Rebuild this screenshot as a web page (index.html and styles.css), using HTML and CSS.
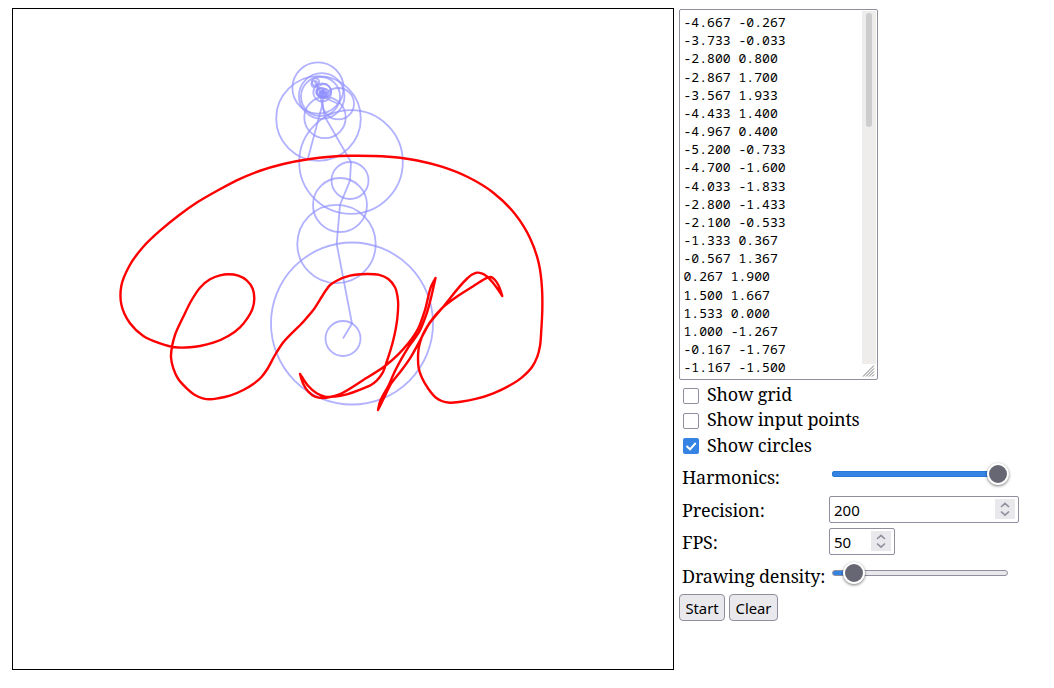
FILE: index.html
```
<!DOCTYPE html>
<html lang="en">
<head>
<meta charset="utf-8">
<title>Fourier drawing</title>
<link rel="stylesheet" href="styles.css">
</head>
<body>
<main class="app">
<svg class="canvas" viewBox="13 9 660 660">
<g class="circles">
<circle cx="343" cy="338.5" r="17.5"/><circle cx="352" cy="323.5" r="81"/><circle cx="336.5" cy="244" r="39.2"/><circle cx="340" cy="205" r="27"/><circle cx="350" cy="180.5" r="18.5"/><circle cx="351" cy="162" r="51.8"/><circle cx="318.5" cy="118.5" r="42.3"/><circle cx="325" cy="117.5" r="20.7"/><circle cx="318" cy="88" r="25.6"/><circle cx="321.7" cy="96" r="22.8"/><circle cx="338.3" cy="103.7" r="15.7"/><circle cx="320.5" cy="96.5" r="19.5"/>
<circle cx="322.3" cy="92.5" r="9"/><circle cx="315.5" cy="82" r="3.7"/><circle cx="314.5" cy="84" r="3"/><circle cx="324" cy="91" r="7"/><circle cx="322" cy="93" r="5"/><circle cx="320" cy="92" r="4"/><circle cx="323" cy="94" r="3"/><circle cx="325" cy="93" r="4"/><circle cx="323" cy="92" r="1.5"/><circle cx="321" cy="94" r="2"/><circle cx="325" cy="95" r="2"/>
<path d="M343 338.5L352 323.5L336.7 244L340 205L350 180.5L351 162L325 117L321 98L322 106L308 158.3M322 106L321 94L315 82L318 88L325 95M323 97L338 103.7"/>
</g>
<path class="trace" id="trace" d="M121.3 286L129.3 266L143.3 246.7L160 230.7L178.3 215.7L197.3 202.3L216.7 191L236.7 180.3L259.3 171L283.3 164L308.3 159.3L330 156.8L350 155.8L373.3 156L400 157.7L417.3 160.5L441.7 166.7L468.3 177.3L493.3 192.7L515 214L530.3 238.7L539 264.3L542 288.3L542.3 310L541.3 330L540 346L537.3 356.7L532 367L522 377.3L510 385.3L493.3 393.3L476.7 398.7L460.7 401.7L450 402.7L441.7 401L436 397.7L428.3 388.7L421.7 377.3L418.7 368.3L418 358.3L418.7 348.3L421.7 337.3L428.3 325L443.3 306.7L466.7 279L471.7 274.7L476.7 272.7L482.3 273.7L487.3 276.7L493.3 283.3L502.3 296L498.3 285L495 280L491 277L486 278.3L476.7 284L456.7 296.7L441.7 308.3L430 322.3L421.7 337.3L410 358.3L401.7 370L391.7 382.7L383.3 399.3L378 410L380 401.7L388.3 386L395 371L401.7 358.3L408.3 347.3L419.3 331.7L426.7 313.3L435.5 278L431.7 285L425 310L418.3 328.3L408.3 343.3L398.3 354.3L385 366L363.3 380L340 394L330 397L323.3 398L315 396.7L308.3 391.7L303.3 384L300 374L302 377L308.3 386L316.7 393.3L325 396.7L335 396.5L346.7 394.3L363.3 388.3L371 385L376.7 380.7L382.7 372.7L387.3 360L393.3 340L397.3 318.3L398 300.7L395 287.3L388.3 279L378.3 274.7L366.7 274L350 275.7L336.7 280.7L330 285L325 291.7L313.3 310L303.3 321.7L283.3 342.3L275 355L266.7 370L261.7 376.7L253.3 384L243.3 390L230 395.7L218.3 398.3L210 399.3L202.7 398.3L195 395L186.7 388.3L178.3 379L173.3 368.3L171 357.3L172.3 345L175 335L183.3 316.7L191.7 300L200 287.7L210 279.3L220 275.3L228.3 274.3L238.3 275.7L246.7 280.3L252.7 288.7L254.3 298.3L252.3 309.3L247.3 318.3L240 327.3L228.3 336L213.3 342.7L200 346L190 347.3L175 347.3L160 343.3L143.3 336L130 323.3L121.3 304.3Z"/>
</svg>
<section class="panel">
<div class="editor"><textarea class="points" spellcheck="false">-4.667 -0.267
-3.733 -0.033
-2.800 0.800
-2.867 1.700
-3.567 1.933
-4.433 1.400
-4.967 0.400
-5.200 -0.733
-4.700 -1.600
-4.033 -1.833
-2.800 -1.433
-2.100 -0.533
-1.333 0.367
-0.567 1.367
0.267 1.900
1.500 1.667
1.533 0.000
1.000 -1.267
-0.167 -1.767
-1.167 -1.500</textarea>
<div class="rail"><div class="scrollbar"><div class="scroll-thumb"></div></div>
<svg class="grip" viewBox="0 0 13 13"><path d="M1 12L12 1M4 12L12 4M7 12L12 7M10 12L12 10"/></svg></div></div>
<div class="checks">
<label class="check"><input type="checkbox"><span>Show grid</span></label>
<label class="check"><input type="checkbox"><span>Show input points</span></label>
<label class="check"><span class="checked"><svg viewBox="0 0 16 16"><path d="M3.5 8L7 11.3L12.7 5"/></svg></span><span>Show circles</span></label>
</div>
<div class="settings">
<label class="name" for="harmonics">Harmonics:</label><input id="harmonics" class="slider full" type="range" min="1" max="15" value="15">
<label class="name mid" for="precision">Precision:</label>
<div class="number wide"><input id="precision" value="200"><svg class="spin" viewBox="0 0 20 20"><path d="M6 8L10 4.3L14 8M6 12.5L10 16.2L14 12.5"/></svg></div>
<label class="name mid" for="fps">FPS:</label>
<div class="number"><input id="fps" value="50"><svg class="spin" viewBox="0 0 20 20"><path d="M6 8L10 4.3L14 8M6 12.5L10 16.2L14 12.5"/></svg></div>
<label class="name density" for="density">Drawing density:</label><input id="density" class="slider" type="range" min="0" max="100" value="6.5" step="0.5">
</div>
<div class="buttons"><button class="start">Start</button><button class="clear">Clear</button></div>
</section>
</main>
<script src="trace.js"></script>
</body>
</html>
```
FILE: trace.js
```
// Smooths the closed trace with cubic segments, keeping its sharp cusps.
const trace = document.getElementById('trace');
const pts = trace.getAttribute('d').replace(/[MZ]/g, '').split('L').map(p => p.split(' ').map(Number));
const n = pts.length;
const unit = (a, b) => {
  const l = Math.hypot(b[0] - a[0], b[1] - a[1]);
  return [(b[0] - a[0]) / l, (b[1] - a[1]) / l, l];
};
const tangents = pts.map((p, i) => {
  const a = unit(pts[(i + n - 1) % n], p);
  const b = unit(p, pts[(i + 1) % n]);
  if (a[0] * b[0] + a[1] * b[1] < 0.3) return [0, 0];
  const x = a[0] * b[2] + b[0] * a[2], y = a[1] * b[2] + b[1] * a[2];
  const l = Math.hypot(x, y);
  return [x / l, y / l];
});
let d = 'M' + pts[0].join(' ');
pts.forEach((p, i) => {
  const j = (i + 1) % n, q = pts[j], k = unit(p, q)[2] * 0.27;
  const s = tangents[i], t = tangents[j];
  d += `C${p[0] + s[0] * k} ${p[1] + s[1] * k} ${q[0] - t[0] * k} ${q[1] - t[1] * k} ${q[0]} ${q[1]}`;
});
trace.setAttribute('d', d + 'Z');
```
FILE: styles.css
```
* { box-sizing: border-box; }
body { margin: 0; background: #fff; color: #000; font: 18px/25px "Noto Serif", "DejaVu Serif Condensed", "Liberation Serif", serif; letter-spacing: -.2px; }
.app { display: flex; gap: 5px; padding: 8px 0 0 12px; }
.canvas { flex: none; width: 662px; height: 662px; border: 1px solid #000; }
.circles { fill: none; stroke: #9090ff; stroke-opacity: .7; stroke-width: 1.8; }
.trace { fill: none; stroke: #f00; stroke-width: 2.4; stroke-linejoin: round; }
.panel { width: 360px; padding-top: 1px; }
.editor { display: flex; width: 199px; height: 371px; border: 1px solid #8f8f9d; border-radius: 2px; padding: 1px; }
.points { flex: 1; min-width: 0; border: 0; outline: 0; padding: 2px 0 0 2.5px; margin: 0; resize: none; overflow: hidden; color: #000; background: none; font: 13.1px/18.17px "Noto Sans Mono", "DejaVu Sans Mono", monospace; letter-spacing: 0; }
.rail { width: 14px; display: flex; flex-direction: column; }
.scrollbar { flex: 1; background: #eeedec; padding: 2px 4px; }
.scroll-thumb { width: 6px; height: 114px; border-radius: 3px; background: #cdcdcd; }
.grip { width: 13px; height: 14px; fill: none; stroke: #777; stroke-width: 1; }
.checks { padding: 2px 0 0 4px; }
.check { display: flex; align-items: center; gap: 8px; height: 25.3px; white-space: nowrap; }
.check input { appearance: none; width: 16px; height: 16px; margin: 2px 0 0; border: 1px solid #8f8f9d; border-radius: 2px; background: #fff; }
.checked { width: 16px; height: 16px; margin-top: 2px; border-radius: 2px; background: #3584e4; }
.checked svg { display: block; fill: none; stroke: #fff; stroke-width: 2; }
.settings { display: grid; grid-template-columns: 147px 190px; column-gap: 3px; grid-template-rows: 36px 32px 31px 36px; padding-left: 3px; align-items: start; }
.name { padding-top: 7px; white-space: nowrap; }
.mid { padding-top: 4px; }
.density { padding-top: 7px; }
.slider { appearance: none; width: 176px; height: 22px; margin: 5px 0 0 0; background: none; }
.slider::-webkit-slider-runnable-track { height: 6px; border: 1px solid #8f8f9d; border-radius: 3px; background: linear-gradient(90deg, #3584e4 22px, #e9e9ed 22px); }
.full { width: 177px; }
.full::-webkit-slider-runnable-track { background: linear-gradient(90deg, #3584e4 165px, #fff 165px); border: 0; box-shadow: inset 0 0 0 1px #2878d8; clip-path: none; }
.slider::-webkit-slider-thumb { appearance: none; width: 22px; height: 22px; margin-top: -9px; border: 2px solid #fff; border-radius: 50%; background: #676774; box-shadow: 0 1px 3px #0008; }
.full::-webkit-slider-thumb { margin-top: -8px; }
.number { display: flex; align-items: center; width: 66px; height: 27px; margin: 2px 0 0 -3px; border: 1px solid #8f8f9d; border-radius: 2px; padding: 0 3px 0 4px; }
.wide { width: 190px; }
.number input { flex: 1; min-width: 0; width: 0; padding: 2px 0 0; border: 0; outline: 0; color: #000; background: none; font: 15px/20px "Noto Sans", sans-serif; letter-spacing: 0; }
.spin { flex: none; width: 20px; height: 20px; background: #e9e9ed; fill: none; stroke: #8f8f9d; stroke-width: 1.7; }
.buttons { display: flex; gap: 4px; padding-top: 1px; }
.buttons button { height: 27px; padding: 2px 0 0; border: 1px solid #8f8f9d; border-radius: 4px; background: #e9e9ed; color: #000; font: 14.8px/20px "Noto Sans", sans-serif; letter-spacing: 0; }
.start { width: 46px; }
.clear { width: 49px; }
```
